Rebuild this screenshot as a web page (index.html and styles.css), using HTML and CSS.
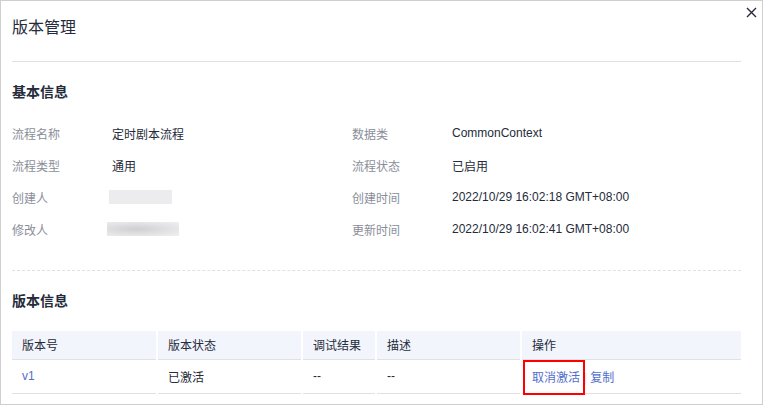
FILE: index.html
```html
<!DOCTYPE html>
<html lang="zh-CN">
<head>
    <meta charset="UTF-8">
    <title>版本管理</title>
    <link rel="stylesheet" href="styles.css">
</head>
<body>
    <div class="dialog">
        <button class="close-btn" aria-label="关闭">
            <svg width="11" height="11" viewBox="0 0 11 11">
                <path d="M1 1 L10 10 M10 1 L1 10" stroke="#252b3a" stroke-width="1.4" fill="none"/>
            </svg>
        </button>

        <div class="dialog-header">
            <h1 class="dialog-title">版本管理</h1>
        </div>

        <h2 class="section-title">基本信息</h2>
        <div class="info-grid">
            <span class="info-label">流程名称</span>
            <span class="info-value">定时剧本流程</span>
            <span class="info-label">数据类</span>
            <span class="info-value">CommonContext</span>

            <span class="info-label">流程类型</span>
            <span class="info-value">通用</span>
            <span class="info-label">流程状态</span>
            <span class="info-value">已启用</span>

            <span class="info-label">创建人</span>
            <span class="info-value"><span class="masked masked-a"></span></span>
            <span class="info-label">创建时间</span>
            <span class="info-value">2022/10/29 16:02:18 GMT+08:00</span>

            <span class="info-label">修改人</span>
            <span class="info-value"><span class="masked masked-b"></span></span>
            <span class="info-label">更新时间</span>
            <span class="info-value">2022/10/29 16:02:41 GMT+08:00</span>
        </div>

        <div class="dashed-line"></div>

        <h2 class="section-title section-title-2">版本信息</h2>
        <table class="version-table">
            <thead>
                <tr>
                    <th class="col-ver">版本号</th>
                    <th class="col-status">版本状态</th>
                    <th class="col-debug">调试结果</th>
                    <th class="col-desc">描述</th>
                    <th>操作</th>
                </tr>
            </thead>
            <tbody>
                <tr>
                    <td><a class="link" href="#">v1</a></td>
                    <td>已激活</td>
                    <td>--</td>
                    <td>--</td>
                    <td class="ops-cell">
                        <a class="link" href="#">取消激活</a><span class="sep">|</span><a class="link" href="#">复制</a>
                        <span class="highlight-box"></span>
                    </td>
                </tr>
            </tbody>
        </table>
    </div>
</body>
</html>
```

FILE: styles.css
```css
html, body {
    margin: 0;
    padding: 0;
    background: #fff;
}
body {
    font-family: "Liberation Sans", "Noto Sans CJK SC", sans-serif;
    font-size: 12px;
    color: #252b3a;
}
.dialog {
    position: relative;
    box-sizing: border-box;
    width: 763px;
    height: 405px;
    border: 1px solid #cfcfcf;
    padding: 0 21px 0 11px;
    overflow: hidden;
}
.close-btn {
    position: absolute;
    top: 5px;
    right: 4px;
    width: 13px;
    height: 13px;
    padding: 1px;
    border: none;
    background: none;
    cursor: pointer;
    line-height: 0;
}
.dialog-header {
    height: 60px;
    border-bottom: 1px solid #dfe1e6;
}
.dialog-title {
    margin: 0;
    padding-top: 15px;
    font-size: 16px;
    line-height: 24px;
    font-weight: normal;
    color: #252b3a;
}
.section-title {
    margin: 20px 0 0;
    font-size: 14px;
    line-height: 20px;
    font-weight: bold;
    color: #252b3a;
}
.info-grid {
    display: grid;
    grid-template-columns: 100px 240px 100px 1fr;
    grid-auto-rows: 32px;
    align-items: center;
    margin-top: 15px;
}
.info-label {
    color: #8a8e99;
}
.info-value {
    color: #252b3a;
}
.masked {
    display: block;
    height: 14px;
}
.masked-a {
    width: 63px;
    margin-left: -3px;
    background: #ececee;
}
.masked-b {
    width: 72px;
    margin-left: -5px;
    background: radial-gradient(ellipse at 40% 50%, #cfcfd2 0%, #e2e2e4 55%, #f0f0f2 100%);
}
.dashed-line {
    margin-top: 25px;
    border-top: 1px dashed #dfe1e6;
}
.section-title-2 {
    margin-top: 20px;
}
.version-table {
    width: 100%;
    margin-top: 20px;
    border-collapse: collapse;
    table-layout: fixed;
}
.version-table th,
.version-table td {
    box-sizing: border-box;
    padding: 0 0 0 10px;
    text-align: left;
    color: #252b3a;
}
.version-table th {
    height: 28px;
    background: #f2f5fc;
    border-left: 2px solid #fff;
    border-bottom: 1px solid #dfe1e6;
    font-weight: normal;
}
.version-table th:first-child {
    border-left: none;
}
.col-ver { width: 145px; }
.col-status { width: 145px; }
.col-debug { width: 74px; }
.col-desc { width: 145px; }
.version-table td {
    height: 34px;
    border-bottom: 1px solid #dfe1e6;
    border-left: 2px solid transparent;
}
.version-table td:first-child {
    border-left: none;
}
.link {
    color: #526ecc;
    text-decoration: none;
}
.sep {
    color: #e6e8ee;
    margin: 0 3px 0 4px;
}
.ops-cell {
    position: relative;
}
.highlight-box {
    position: absolute;
    left: 1px;
    top: 0;
    width: 62px;
    height: 35px;
    box-sizing: border-box;
    border: 2px solid #ff0000;
}
```
